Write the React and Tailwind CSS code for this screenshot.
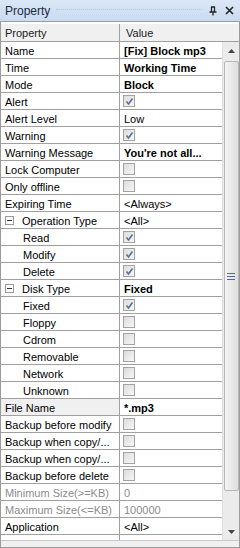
import React from "react";

const rows = [
  { label: "Name", value: "[Fix] Block mp3", bold: true },
  { label: "Time", value: "Working Time", bold: true },
  { label: "Mode", value: "Block", bold: true },
  { label: "Alert", check: true },
  { label: "Alert Level", value: "Low" },
  { label: "Warning", check: true },
  { label: "Warning Message", value: "You're not all...", bold: true },
  { label: "Lock Computer", check: false },
  { label: "Only offline", check: false },
  { label: "Expiring Time", value: "<Always>" },
  { label: "Operation Type", value: "<All>", group: true },
  { label: "Read", check: true, indent: true },
  { label: "Modify", check: true, indent: true },
  { label: "Delete", check: true, indent: true },
  { label: "Disk Type", value: "Fixed", bold: true, group: true },
  { label: "Fixed", check: true, indent: true },
  { label: "Floppy", check: false, indent: true },
  { label: "Cdrom", check: false, indent: true },
  { label: "Removable", check: false, indent: true },
  { label: "Network", check: false, indent: true },
  { label: "Unknown", check: false, indent: true },
  { label: "File Name", value: "*.mp3", bold: true, selected: true },
  { label: "Backup before modify", check: false },
  { label: "Backup when copy/...", check: false },
  { label: "Backup when copy/...", check: false },
  { label: "Backup before delete", check: false },
  { label: "Minimum Size(>=KB)", value: "0", dim: true },
  { label: "Maximum Size(<=KB)", value: "100000", dim: true },
  { label: "Application", value: "<All>" },
];

function CheckBox({ checked }) {
  return (
    <div className="w-[12px] h-[12px] border border-[#a3a3a3] bg-gradient-to-br from-[#dcdcdc] to-[#f7f7f7] flex items-center justify-center">
      {checked && (
        <svg width="9" height="9" viewBox="0 0 9 9">
          <path d="M1.5 4.5 L3.5 7 L7.5 1.5" fill="none" stroke="#55709a" strokeWidth="1.6" />
        </svg>
      )}
    </div>
  );
}

function Minus() {
  return (
    <div className="w-[9px] h-[9px] border border-[#9a9a9a] bg-white flex items-center justify-center mr-[8px] -mt-[2px]">
      <div className="w-[5px] h-[1px] bg-[#333]" />
    </div>
  );
}

function Row({ r }) {
  return (
    <div className="flex h-[17px] border-b border-[#a0a0a0]">
      <div
        className={`w-[119px] shrink-0 border-r border-[#a0a0a0] flex items-center pt-[2px] overflow-hidden whitespace-nowrap ${
          r.selected ? "bg-[#f0f0f0]" : ""
        } ${r.indent ? "pl-[22px]" : "pl-[4px]"} ${r.dim ? "text-[#8c8c8c]" : "text-black"}`}
      >
        {r.group && <Minus />}
        {r.label}
      </div>
      <div
        className={`flex-1 flex items-center pl-[4px] overflow-hidden whitespace-nowrap ${
          r.bold ? "font-bold" : ""
        } ${r.dim ? "text-[#8c8c8c]" : "text-black"} ${r.check !== undefined ? "" : "pt-[2px]"}`}
      >
        {r.check !== undefined ? (
          <div className="-ml-[1px]">
            <CheckBox checked={r.check} />
          </div>
        ) : (
          r.value
        )}
      </div>
    </div>
  );
}

export default function App() {
  return (
    <div
      className="w-[240px] h-[548px] bg-[#d5e3f4] flex flex-col text-[11px] overflow-hidden"
      style={{ fontFamily: '"Liberation Sans", Arial, sans-serif' }}
    >
      {/* title bar */}
      <div className="h-[21px] shrink-0 flex items-center pl-[5px] pr-[6px] bg-gradient-to-b from-[#dbe7f5] to-[#c9dbf0]">
        <span className="text-[12px] text-[#1b2b44]">Property</span>
        <div className="flex-1 mx-[6px] h-[4px] border-t border-dotted border-[#b6c9e2]" />
        <svg width="10" height="10" viewBox="0 0 10 10" className="mr-[7px]">
          <path d="M3 1 H7 M3.5 1 V6 M6.5 1 V6 M1.5 6 H8.5 M5 6 V9.5" stroke="#222" strokeWidth="1.3" fill="none" />
        </svg>
        <svg width="9" height="9" viewBox="0 0 9 9">
          <path d="M1 1 L8 8 M8 1 L1 8" stroke="#222" strokeWidth="1.6" />
        </svg>
      </div>

      {/* grid */}
      <div className="flex-1 flex flex-col border border-[#9c9c9c] bg-white min-h-0">
        <div className="h-[20px] shrink-0 flex border-b border-[#a0a0a0] bg-white">
          <div className="w-[119px] border-r border-[#a0a0a0] flex items-center pl-[4px] pt-[1px] bg-[#f0f0f0] mt-[2px] text-[#222]">
            Property
          </div>
          <div className="flex-1 flex items-center pl-[6px] pt-[1px] bg-[#f0f0f0] mt-[2px] text-[#222]">Value</div>
        </div>

        <div className="flex-1 flex min-h-0">
          <div className="w-[221px] flex flex-col overflow-hidden">
            {rows.map((r, i) => (
              <Row key={i} r={r} />
            ))}
            <div className="flex h-[17px]">
              <div className="w-[119px] border-r border-[#a0a0a0]" />
            </div>
          </div>

          {/* scrollbar */}
          <div className="w-[17px] shrink-0 bg-[#ebebeb] border-l border-[#e2e2e2] flex flex-col items-center">
            <div className="h-[17px] w-full flex items-center justify-center">
              <svg width="7" height="4" viewBox="0 0 7 4">
                <path d="M0 4 L3.5 0 L7 4 Z" fill="#444" />
              </svg>
            </div>
            <div className="w-[15px] h-[430px] mt-[2px] rounded-[2px] border border-[#b8b8b8] bg-gradient-to-r from-[#f4f4f4] to-[#dedede] flex items-center justify-center">
              <svg width="8" height="7" viewBox="0 0 8 7">
                <path d="M0 0.5 H8 M0 3.5 H8 M0 6.5 H8" stroke="#4f6b99" strokeWidth="1" />
              </svg>
            </div>
            <div className="flex-1" />
            <div className="h-[17px] w-full flex items-center justify-center">
              <svg width="7" height="4" viewBox="0 0 7 4">
                <path d="M0 0 L3.5 4 L7 0 Z" fill="#444" />
              </svg>
            </div>
          </div>
        </div>

        <div className="h-[7px] shrink-0 bg-[#f0f0f0] border-t border-[#c8c8c8]" />
      </div>
    </div>
  );
}
